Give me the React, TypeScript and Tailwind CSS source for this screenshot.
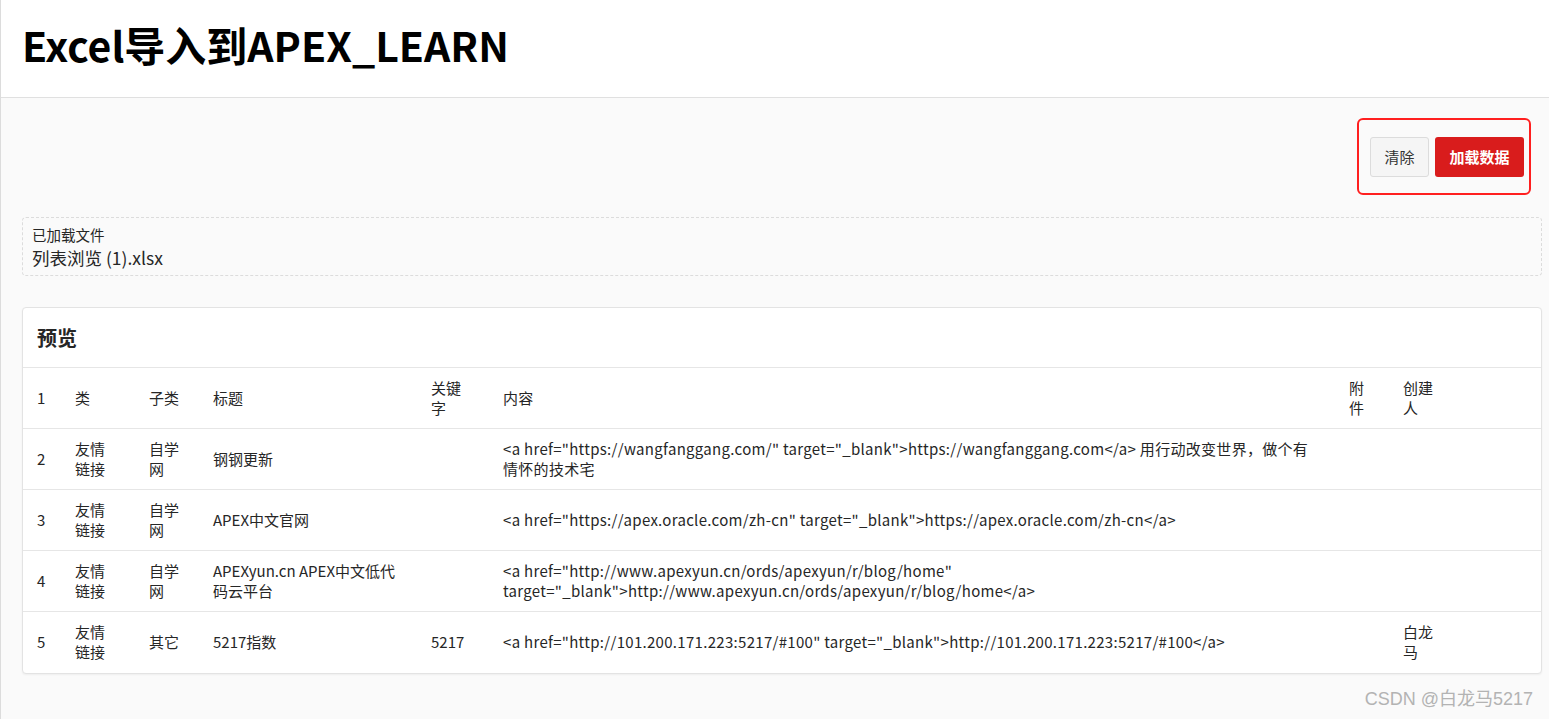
import React from 'react';

interface Row {
  id: number;
  category: string;
  subCategory: string;
  title: string;
  keyword: string;
  content: string;
  attachment: string;
  creator: string;
}

const rows: Row[] = [
  {
    id: 2,
    category: '友情链接',
    subCategory: '自学网',
    title: '钢钢更新',
    keyword: '',
    content: '<a href="https://wangfanggang.com/" target="_blank">https://wangfanggang.com</a> 用行动改变世界，做个有情怀的技术宅',
    attachment: '',
    creator: '',
  },
  {
    id: 3,
    category: '友情链接',
    subCategory: '自学网',
    title: 'APEX中文官网',
    keyword: '',
    content: '<a href="https://apex.oracle.com/zh-cn" target="_blank">https://apex.oracle.com/zh-cn</a>',
    attachment: '',
    creator: '',
  },
  {
    id: 4,
    category: '友情链接',
    subCategory: '自学网',
    title: 'APEXyun.cn APEX中文低代码云平台',
    keyword: '',
    content: '<a href="http://www.apexyun.cn/ords/apexyun/r/blog/home" target="_blank">http://www.apexyun.cn/ords/apexyun/r/blog/home</a>',
    attachment: '',
    creator: '',
  },
  {
    id: 5,
    category: '友情链接',
    subCategory: '其它',
    title: '5217指数',
    keyword: '5217',
    content: '<a href="http://101.200.171.223:5217/#100" target="_blank">http://101.200.171.223:5217/#100</a>',
    attachment: '',
    creator: '白龙马',
  },
];

const cell = 'h-[61px] pl-[14px] pr-[16px] align-middle text-left font-normal';
// 内容列：拉丁字符稍宽一些
const contentCell = 'h-[61px] pl-[14px] pr-[18px] align-middle text-left font-normal tracking-[0.3px]';

export default function App() {
  return (
    <div className="min-h-[719px] bg-[#fafafa] border-l border-[#dcdcdc] text-[#333] font-['Noto_Sans_CJK_SC',sans-serif]">
      {/* 页头 */}
      <div className="h-[98px] bg-white border-b border-[#e0e0e0] flex items-center pl-[21px] pb-[8px]">
        <h1 className="text-[41px] font-bold leading-none text-black">Excel导入到APEX_LEARN</h1>
      </div>

      <div className="pl-[21px] pr-[7px] pt-[20px]">
        {/* 按钮 */}
        <div className="flex justify-end mr-[11px]">
          <div className="flex gap-[6px] border-2 border-[#ff1f1f] rounded-[6px] pl-[11px] pr-[5px] pt-[17px] pb-[16px]">
            <button className="w-[59px] h-[40px] bg-[#f5f5f5] border border-[#dcdcdc] rounded-[3px] text-[15px] text-[#333]">清除</button>
            <button className="w-[89px] h-[40px] bg-[#d91c1c] rounded-[3px] text-[15px] font-bold text-white">加载数据</button>
          </div>
        </div>

        {/* 已加载文件 */}
        <div className="mt-[22px] border border-dashed border-[#dcdcdc] rounded-sm pl-[9px] pt-[8px] pb-[6px]">
          <p className="text-[14.5px] leading-[18px] text-[#262626]">已加载文件</p>
          <p className="mt-[2px] text-[17.5px] leading-[23px] text-[#262626]">列表浏览 (1).xlsx</p>
        </div>

        {/* 预览 */}
        <div className="mt-[31px] bg-white border border-[#e3e3e3] rounded-sm shadow-[0_1px_2px_rgba(0,0,0,0.05)]">
          <div className="h-[59px] flex items-center pl-[14px]">
            <h2 className="text-[20px] font-bold text-[#262626]">预览</h2>
          </div>
          <table className="w-full table-fixed border-collapse text-[15px] leading-[20px] text-[#262626]">
            <colgroup>
              <col className="w-[38px]" />
              <col className="w-[74px]" />
              <col className="w-[64px]" />
              <col className="w-[218px]" />
              <col className="w-[72px]" />
              <col className="w-[846px]" />
              <col className="w-[54px]" />
              <col className="w-[74px]" />
              <col />
            </colgroup>
            <thead>
              <tr className="border-t border-[#e6e6e6]">
                <th className={cell}>1</th>
                <th className={cell}>类</th>
                <th className={cell}>子类</th>
                <th className={cell}>标题</th>
                <th className={cell}>关键字</th>
                <th className={contentCell}>内容</th>
                <th className={cell}>附件</th>
                <th className={cell}>创建人</th>
                <th className={cell}></th>
              </tr>
            </thead>
            <tbody>
              {rows.map(row => (
                <tr key={row.id} className="border-t border-[#e6e6e6]">
                  <td className={cell}>{row.id}</td>
                  <td className={cell}>{row.category}</td>
                  <td className={cell}>{row.subCategory}</td>
                  <td className={cell}>{row.title}</td>
                  <td className={cell}>{row.keyword}</td>
                  <td className={contentCell}>{row.content}</td>
                  <td className={cell}>{row.attachment}</td>
                  <td className={cell}>{row.creator}</td>
                  <td className={cell}></td>
                </tr>
              ))}
            </tbody>
          </table>
        </div>

        {/* 水印 */}
        <div className="flex justify-end pr-[9px] pt-[12px] pb-[10px]">
          <span className="text-[18px] leading-[26px] text-[#b3b3b3] font-['Liberation_Sans','Noto_Sans_CJK_SC',sans-serif]">CSDN @白龙马5217</span>
        </div>
      </div>
    </div>
  );
}
